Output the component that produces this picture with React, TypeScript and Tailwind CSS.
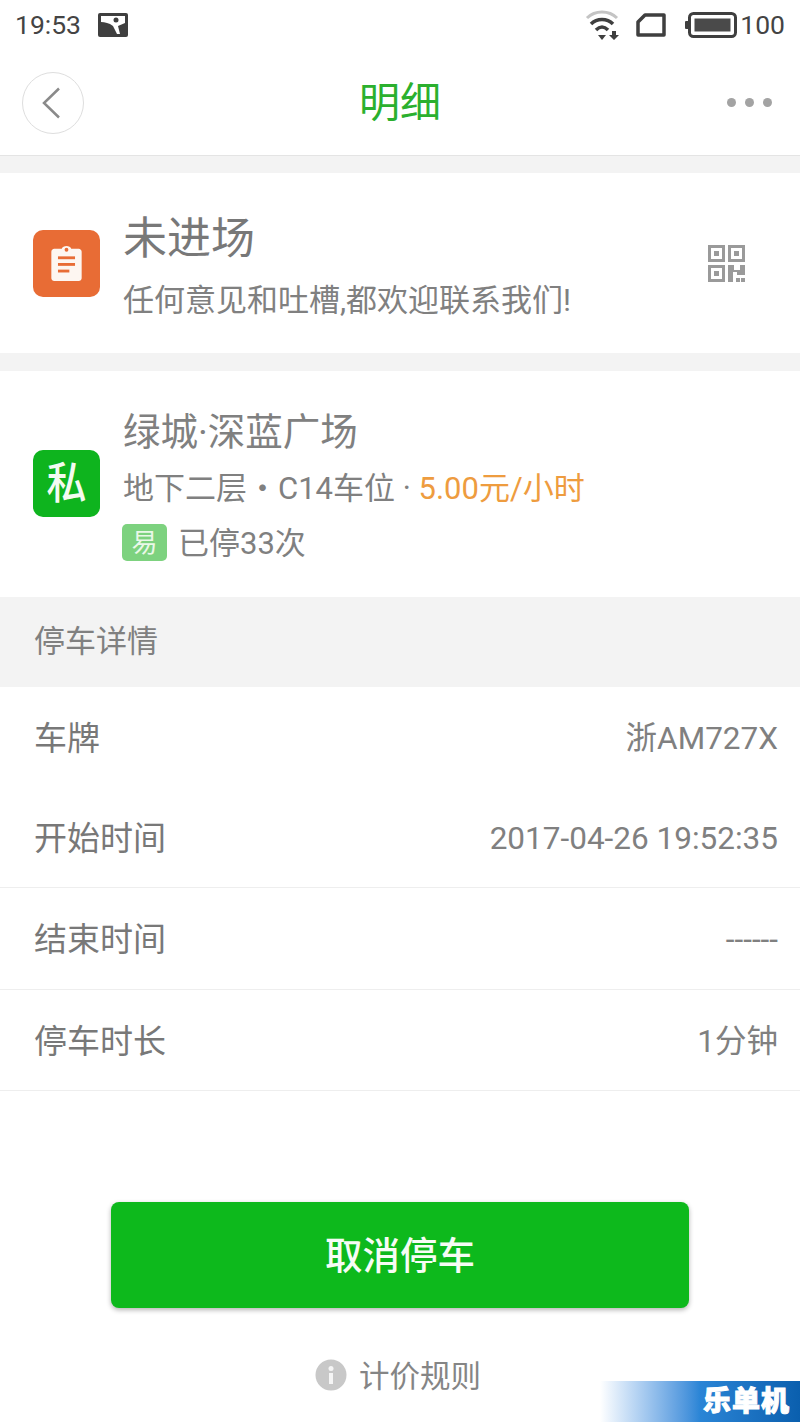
const font = "font-['Roboto','Noto_Sans_CJK_SC',sans-serif]";

function DetailRow({ label, value, className }: { label: string; value: string; className: string }) {
  return (
    <div className={`flex items-center justify-between pl-[34px] pr-[22px] pt-[3px] ${className}`}>
      <span className="text-[33px] text-[#787878]">{label}</span>
      <span className="text-[31.5px] text-[#808080]">{value}</span>
    </div>
  );
}

function StatusBar() {
  return (
    <div className="flex h-[50px] items-center justify-between px-[15px] text-[#444444]">
      <div className="flex items-center gap-[17px]">
        <span className="text-[26.5px] leading-none">19:53</span>
        <svg width="30" height="24" viewBox="0 0 30 24">
          <rect width="30" height="24" rx="2" fill="#3f3f3f" />
          <path d="M3 3 H27 V10 L20 13 L22 21 L19 21 L15 13 C11 10 7 9 3 9 Z" fill="#fff" />
          <circle cx="18" cy="7" r="2.500" fill="#3f3f3f" />
        </svg>
      </div>
      <div className="flex items-center">
        <svg width="36" height="32" viewBox="0 0 36 32" className="mr-[15px]">
          <path d="M2 9 C10 1 24 1 32 9" fill="none" stroke="#c4c4c4" strokeWidth="3" />
          <path d="M6 15 C12 9 22 9 28 15" fill="none" stroke="#3f3f3f" strokeWidth="3.5" />
          <path d="M11 21 C15 17 19 17 23 21" fill="none" stroke="#3f3f3f" strokeWidth="3.5" />
          <path d="M13 26 H21 L17 31 Z" fill="#3f3f3f" />
          <path d="M27 22 H31 V26 H34 L29 31 L24 26 H27 Z" fill="#3f3f3f" />
        </svg>
        <svg width="30" height="24" viewBox="0 0 30 24" className="mr-[19px]">
          <path d="M2 22 V9 L9 2 H28 V22 Z" fill="none" stroke="#3f3f3f" strokeWidth="3.500" strokeLinejoin="round" />
        </svg>
        <svg width="52" height="26" viewBox="0 0 52 26" className="mr-[3px]">
          <rect x="0" y="9" width="4" height="8" rx="1" fill="#3f3f3f" />
          <rect x="4.500" y="1.500" width="46" height="23" rx="4" fill="none" stroke="#3f3f3f" strokeWidth="3" />
          <rect x="9.500" y="6.500" width="36" height="13" fill="#4a4a4a" />
        </svg>
        <span className="text-[26.5px] leading-none">100</span>
      </div>
    </div>
  );
}

export default function App() {
  return (
    <div className={`relative h-[1422px] w-[800px] overflow-hidden bg-white ${font}`}>
      <StatusBar />

      <div className="flex h-[106px] items-center border-b border-[#e4e4e4] pl-[22px] pr-[28px]">
        <div className="flex-1">
          <div className="flex h-[62px] w-[62px] items-center justify-center rounded-full border border-[#dedede]">
            <svg width="19" height="32" viewBox="0 0 19 32" className="mr-[4px]">
              <polyline points="17,1.500 2,16 17,30.500" fill="none" stroke="#8a8a8a" strokeWidth="2.500" />
            </svg>
          </div>
        </div>
        <span className="pl-[6px] pt-[2px] text-[41px] leading-none text-[#2bb02e]">明细</span>
        <div className="flex flex-1 justify-end gap-[9px]">
          <span className="h-[9px] w-[9px] rounded-full bg-[#a3a3a3]" />
          <span className="h-[9px] w-[9px] rounded-full bg-[#a3a3a3]" />
          <span className="h-[9px] w-[9px] rounded-full bg-[#a3a3a3]" />
        </div>
      </div>
      <div className="h-[17px] bg-[#f3f3f3]" />

      <div className="flex h-[180px] items-center pl-[33px] pr-[55px]">
        <div className="flex h-[67px] w-[67px] items-center justify-center rounded-[10px] bg-[#e86c35]">
          <svg width="31" height="36" viewBox="0 0 32 38">
            <path d="M3 4 H11 C12 0 20 0 21 4 H29 C30.500 4 32 5.500 32 7 V35 C32 36.500 30.500 38 29 38 H3 C1.500 38 0 36.500 0 35 V7 C0 5.500 1.500 4 3 4 Z" fill="#fdf6f1" />
            <circle cx="16" cy="5" r="2" fill="#e86c35" />
            <rect x="7" y="12" width="18" height="3" fill="#e86c35" />
            <rect x="7" y="19" width="18" height="3" fill="#e86c35" />
            <rect x="7" y="26" width="12" height="3" fill="#e86c35" />
          </svg>
        </div>
        <div className="ml-[23px] flex flex-1 flex-col pt-[7px]">
          <span className="text-[44px] leading-[54px] text-[#787878]">未进场</span>
          <span className="mt-[15px] text-[31px] leading-[40px] text-[#808080]">任何意见和吐槽,都欢迎联系我们!</span>
        </div>
        <svg width="37" height="37" viewBox="0 0 37 37">
          <g fill="none" stroke="#9a9a9a" strokeWidth="3">
            <rect x="1.500" y="1.500" width="14" height="14" />
            <rect x="21.500" y="1.500" width="14" height="14" />
            <rect x="1.500" y="21.500" width="14" height="14" />
          </g>
          <g fill="#9a9a9a">
            <rect x="6" y="6" width="5" height="5" />
            <rect x="26" y="6" width="5" height="5" />
            <rect x="6" y="26" width="5" height="5" />
            <path d="M20 20 H26 V25 H32 V20 H37 V30 H29 V27 H25 V37 H20 Z" />
            <rect x="28" y="33" width="4" height="4" />
            <rect x="33" y="33" width="4" height="4" />
          </g>
        </svg>
      </div>
      <div className="h-[18px] bg-[#f3f3f3]" />

      <div className="flex h-[226px] items-center pl-[33px]">
        <div className="mb-[2px] flex h-[67px] w-[67px] items-center justify-center rounded-[10px] bg-[#0eb41e] pt-[4px]">
          <span className="scale-y-110 text-[40px] font-medium leading-none text-[#f4fbf1]">私</span>
        </div>
        <div className="ml-[23px] flex flex-col pt-[5px]">
          <span className="text-[37.5px] leading-[44px] text-[#808080]">绿城·深蓝广场</span>
          <span className="mt-[16px] text-[31px] leading-[38px] text-[#808080]">
            地下二层・C14车位 · <span className="text-[#ee9c3f]">5.00元/小时</span>
          </span>
          <div className="mt-[16px] flex items-center">
            <span className="-ml-[1px] mb-[2px] flex h-[37px] w-[45px] items-center justify-center rounded-[5px] bg-[#7dd27f] text-[26px] leading-none text-[#eaf8e8]">易</span>
            <span className="ml-[11px] text-[31px] leading-[38px] text-[#808080]">已停33次</span>
          </div>
        </div>
      </div>

      <div className="flex h-[90px] items-center bg-[#f3f3f3] pl-[34px] text-[31px] text-[#808080]">停车详情</div>

      <DetailRow label="车牌" value="浙AM727X" className="h-[100px]" />
      <DetailRow label="开始时间" value="2017-04-26 19:52:35" className="h-[101px] border-b border-[#eeeeee]" />
      <DetailRow label="结束时间" value="------" className="h-[102px] border-b border-[#eeeeee]" />
      <DetailRow label="停车时长" value="1分钟" className="h-[101px] border-b border-[#eeeeee]" />

      <div className="mx-[111px] mt-[111px] flex h-[106px] items-center justify-center rounded-[8px] bg-[#0db91c] pt-[2px] text-[37.500px] font-medium text-[#f6fcf5] shadow-[0_2px_5px_rgba(0,0,0,0.3)]">
        取消停车
      </div>

      <div className="mt-[50px] flex items-center justify-center pr-[4px]">
        <svg width="32" height="32" viewBox="0 0 32 32">
          <circle cx="16" cy="16" r="15.500" fill="#c8c8c8" />
          <circle cx="16" cy="9.500" r="2.500" fill="#f5f5f5" />
          <rect x="14" y="14" width="4" height="11" fill="#f5f5f5" />
        </svg>
        <span className="ml-[12px] pt-[4px] text-[30.500px] leading-none text-[#858585]">计价规则</span>
      </div>

      <div className="absolute bottom-0 right-0 flex h-[41px] w-[200px] items-center justify-end bg-gradient-to-r from-white via-[#2a85d6] via-50% to-[#0a5fae] pr-[10px] text-[28px] font-black leading-none tracking-[1px] text-white [-webkit-text-stroke:1px_white]">
        乐单机
      </div>
    </div>
  );
}
